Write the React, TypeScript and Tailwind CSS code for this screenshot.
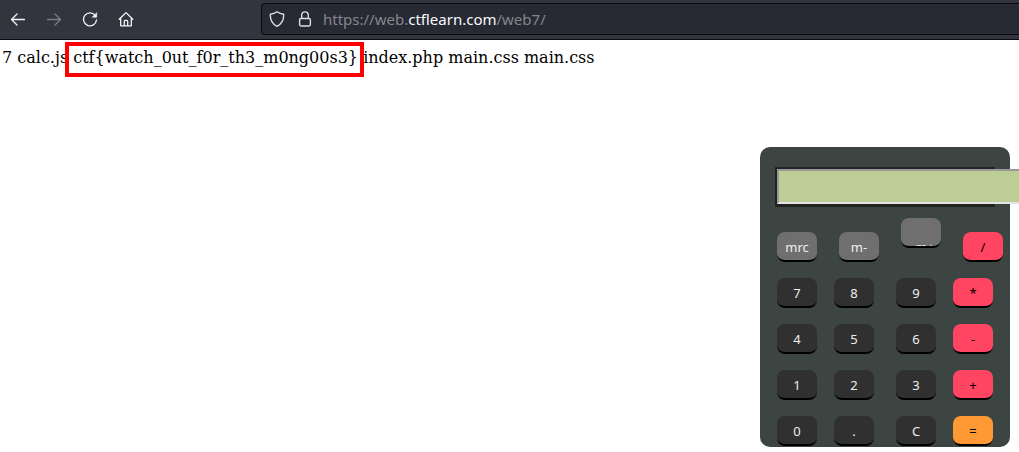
import React from "react";

type Tone = "gray" | "dark" | "pink" | "orange";

const tones: Record<Tone, string> = {
  gray: "bg-[#6f6f6f] text-[#eeeeee]",
  dark: "bg-[#303030] text-[#eeeeee]",
  pink: "bg-[#ff4561] text-black",
  orange: "bg-[#ff9933] text-black",
};

const topRow: [string, Tone][] = [["mrc", "gray"], ["m-", "gray"], ["m+", "gray"], ["/", "pink"]];

const rows: [string, Tone][][] = [
  [["7", "dark"], ["8", "dark"], ["9", "dark"], ["*", "pink"]],
  [["4", "dark"], ["5", "dark"], ["6", "dark"], ["-", "pink"]],
  [["1", "dark"], ["2", "dark"], ["3", "dark"], ["+", "pink"]],
  [["0", "dark"], [".", "dark"], ["C", "dark"], ["=", "orange"]],
];

function Key({ label, tone }: { label: string; tone: Tone }) {
  const raised = label === "m+";
  return (
    <button
      type="button"
      className={`h-[30px] w-10 shrink-0 overflow-hidden rounded-lg border-b-2 border-black text-center text-[13px] leading-[30px] ${tones[tone]} ${raised ? "-mt-[14px] pt-[14px] pl-2" : ""}`}
    >
      {label}
    </button>
  );
}

function NavButton({ label, dim, children }: { label: string; dim?: boolean; children: React.ReactNode }) {
  return (
    <button type="button" aria-label={label} className={`flex size-4 items-center justify-center ${dim ? "text-[#7c7d83]" : "text-[#f5f5f8]"}`}>
      <svg viewBox="0 0 16 16" className="size-4" fill="none" stroke="currentColor" strokeWidth="1.3" strokeLinecap="round" strokeLinejoin="round">
        {children}
      </svg>
    </button>
  );
}

function Toolbar() {
  return (
    <header className="flex h-10 items-start border-b border-[#0c0c0d] bg-[#33353e] pt-[3px] font-['Noto_Sans',sans-serif]">
      <nav className="flex h-8 w-[261px] shrink-0 items-center gap-5 pl-[10px]">
        <NavButton label="Back"><path d="M14.4 8.5H1.6M7 3 1.5 8.5 7 14" /></NavButton>
        <NavButton label="Forward" dim><path d="M1.6 8.5h12.8M9 3l5.500 5.500L9 14" /></NavButton>
        <NavButton label="Reload">
          <path d="M13.500 4.800A6.500 6.500 0 1 0 14.500 9" />
          <path d="M14.700 2v4.200h-4.200z" fill="currentColor" strokeWidth="0.6" />
        </NavButton>
        <NavButton label="Home">
          <path d="M1.200 8.200 8 1.600l6.800 6.600M2.700 7v7.800h10.600V7M6.300 14.500v-4.200q0-1 1-1h1.400q1 0 1 1v4.200" />
        </NavButton>
      </nav>
      <div className="flex h-8 min-w-0 flex-1 items-center rounded-l border border-r-0 border-[#0c0c0f] bg-[#272933] pl-[7px]">
        <svg viewBox="0 0 16 16" className="size-4 shrink-0" fill="none" stroke="#dedee2" strokeWidth="1.4" strokeLinejoin="round">
          <path d="M8 .8c2 1.500 4 2.200 6.700 2.500C14.900 9 12.800 13 8 15.300 3.200 13 1.100 9 1.300 3.300 4 3 6 2.300 8 .8z" />
        </svg>
        <svg viewBox="0 0 16 16" className="ml-3 size-4 shrink-0" fill="none" stroke="#dedee2" strokeWidth="1.4">
          <rect x="2.600" y="7.500" width="10.800" height="7.500" rx="1.400" />
          <path d="M4.700 7.500V4.200a3.300 3.300 0 0 1 6.600 0v3.300" />
        </svg>
        <a href="#web7" className="ml-[10px] text-[15px] leading-5 whitespace-nowrap text-[#85868d]">
          https://web.<span className="text-[#fbfbfe]">ctflearn.com</span>/web7/
        </a>
      </div>
    </header>
  );
}

function Calculator() {
  return (
    <section aria-label="Calculator" className="h-[300px] w-[250px] shrink-0 rounded-[10px] bg-[#3d4543] pt-5 pl-[15px] font-['Noto_Sans',sans-serif]">
      <div className="h-10 w-[220px] border-2 border-[#222222]">
        <div className="h-[38px] w-[218px] bg-[#222222]">
          <input
            type="text"
            aria-label="Display"
            readOnly
            className="block h-[35px] w-[260px] border-2 border-t-[#999999] border-r-[#e3e3e3] border-b-[#e3e3e3] border-l-[#999999] bg-[#bccd95] px-1 text-right outline-none"
          />
        </div>
      </div>
      <div className="mt-[25px] flex gap-[22px] pl-[2px]">
        {topRow.map(([label, tone]) => <Key key={label} label={label} tone={tone} />)}
      </div>
      {rows.map((row) => (
        <div key={row[0][0]} className="mt-4 grid grid-cols-[57px_62px_57px_40px] pl-[2px]">
          {row.map(([label, tone]) => <Key key={label} label={label} tone={tone} />)}
        </div>
      ))}
    </section>
  );
}

export default function App() {
  return (
    <div className="min-h-screen overflow-x-hidden bg-white">
      <Toolbar />
      <main>
        <p className="px-[2px] pt-2 font-['DejaVu_Serif',serif] text-base leading-5 text-black">
          7 calc.js{" "}
          <span className="relative">
            ctf&#123;watch_0ut_f0r_th3_m0ng00s3&#125;
            <span aria-hidden="true" className="absolute -top-[6px] -right-[6px] -bottom-[10px] -left-2 border-4 border-[#ff0000]" />
          </span>{" "}
          index.php main.css main.css
        </p>
        <div className="mt-[79px] flex justify-end pr-[9px]">
          <Calculator />
        </div>
      </main>
    </div>
  );
}
